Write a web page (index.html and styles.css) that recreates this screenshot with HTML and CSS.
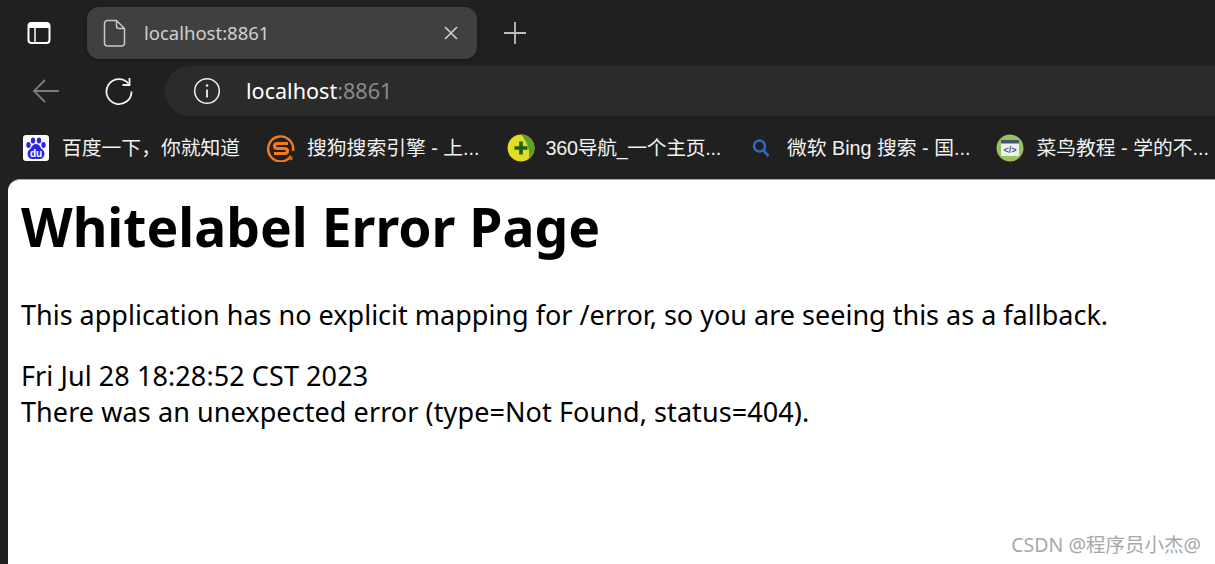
FILE: index.html
```html
<!DOCTYPE html>
<html>
<head>
    <title>Whitelabel Error Page</title>
    <link rel="stylesheet" href="styles.css">
</head>
<body>
    <div class="tabstrip">
        <svg class="sidebar-icon" width="26" height="26" viewBox="0 0 26 26">
            <rect x="2.500" y="3" width="21" height="20" rx="3" fill="none" stroke="#fff" stroke-width="2"/>
            <path d="M2.500 6a3 3 0 0 1 3-3h15a3 3 0 0 1 3 3v2h-21z" fill="#fff"/>
            <path d="M9 8v15" stroke="#fff" stroke-width="1.500"/>
        </svg>
        <div class="tab">
            <svg class="page-icon" width="24" height="28" viewBox="0 0 24 28">
                <path d="M4.500 1.500h9l8 8v14.500a3 3 0 0 1-3 3h-14a3 3 0 0 1-3-3v-19.500a3 3 0 0 1 3-3z M13.500 1.500v5.500a2.500 2.500 0 0 0 2.500 2.500h5.500" fill="none" stroke="#c8c8c8" stroke-width="1.500"/>
            </svg>
            <span class="tab-title">localhost:8861</span>
            <svg class="tab-close" width="16" height="16" viewBox="0 0 16 16">
                <path d="M2 2l12 12M14 2L2 14" stroke="#cfcfcf" stroke-width="1.600"/>
            </svg>
        </div>
        <svg class="new-tab" width="24" height="24" viewBox="0 0 24 24">
            <path d="M12 1v22M1 12h22" stroke="#bdbdbd" stroke-width="1.800"/>
        </svg>
    </div>

    <div class="toolbar">
        <svg class="back" width="30" height="26" viewBox="0 0 30 26">
            <path d="M28 13H3M14 2L3 13l11 11" fill="none" stroke="#7b7b7b" stroke-width="1.800"/>
        </svg>
        <svg class="reload" width="30" height="30" viewBox="0 0 30 30">
            <path d="M24.500 7.500A12.500 12.500 0 1 0 27.500 15.500" fill="none" stroke="#f2f2f2" stroke-width="1.800"/>
            <path d="M25.500 2v7h-7" fill="none" stroke="#f2f2f2" stroke-width="1.800"/>
        </svg>
        <div class="address">
            <svg width="28" height="28" viewBox="0 0 28 28">
                <circle cx="14" cy="14" r="12.300" fill="none" stroke="#f2f2f2" stroke-width="1.500"/>
                <path d="M14 12.500v8" stroke="#f2f2f2" stroke-width="1.800"/>
                <circle cx="14" cy="8.500" r="1.200" fill="#f2f2f2"/>
            </svg>
            <span class="url">localhost<span class="port">:8861</span></span>
        </div>
    </div>

    <div class="bookmarks">
        <div class="bookmark">
            <svg class="fav" width="28" height="28" viewBox="0 0 28 28">
                <rect x="1" y="1" width="26" height="26" rx="3" fill="#fff"/>
                <g fill="#2f22e0">
                    <ellipse cx="6.500" cy="11" rx="2.200" ry="3"/>
                    <ellipse cx="11" cy="6.500" rx="2.200" ry="3"/>
                    <ellipse cx="17" cy="6.500" rx="2.200" ry="3"/>
                    <ellipse cx="21.500" cy="11" rx="2.200" ry="3"/>
                    <path d="M14 10c4 0 4 4 7 6 3 3 1 9-3 9H10c-4 0-6-6-3-9 3-2 3-6 7-6z"/>
                </g>
                <text x="14" y="23" class="du">du</text>
            </svg>
            <span class="name">百度一下，你就知道</span>
        </div>
        <div class="bookmark sogou">
            <svg class="fav" width="28" height="28" viewBox="0 0 28 28">
                <path d="M24 22A12.500 12.500 0 1 1 26 17" fill="none" stroke="#f47a1c" stroke-width="2.400"/>
                <circle cx="24" cy="24.500" r="1.800" fill="#e0561a"/>
                <path d="M21 9.500H10.500q-3 0-3 2.500t3 2.500h7q3 0 3 2.500t-3 2.500H7" fill="none" stroke="#f47a1c" stroke-width="3.200"/>
            </svg>
            <span class="name">搜狗搜索引擎 - 上...</span>
        </div>
        <div class="bookmark nav360">
            <svg class="fav" width="28" height="28" viewBox="0 0 28 28">
                <circle cx="14" cy="14" r="13.500" fill="#e3dc20"/>
                <path d="M14 .5a13.500 13.500 0 0 1 13.500 13.500c0 5-3 9-6 11 2-6 0-16-7.500-24.500z" fill="#58a32e"/>
                <path d="M14 7.500v13M7.500 14h13" stroke="#1d5e22" stroke-width="3.600"/>
            </svg>
            <span class="name">360导航_一个主页...</span>
        </div>
        <div class="bookmark bing">
            <svg class="fav" width="28" height="28" viewBox="0 0 28 28">
                <circle cx="12.500" cy="12" r="5.500" fill="none" stroke="#2a6ac0" stroke-width="2.600"/>
                <path d="M16.500 16.500l5 5.500" stroke="#2a6ac0" stroke-width="2.800"/>
            </svg>
            <span class="name">微软 Bing 搜索 - 国...</span>
        </div>
        <div class="bookmark runoob">
            <svg class="fav" width="28" height="28" viewBox="0 0 28 28">
                <circle cx="14" cy="14" r="13.500" fill="#96c35e"/>
                <rect x="5" y="6" width="18" height="16" rx="1" fill="#eef0ec"/>
                <rect x="5" y="6" width="18" height="3.500" fill="#44596b"/>
                <text x="14" y="19" class="tag">&lt;/&gt;</text>
            </svg>
            <span class="name">菜鸟教程 - 学的不...</span>
        </div>
    </div>

    <div class="page">
        <h1>Whitelabel Error Page</h1>
        <p>This application has no explicit mapping for /error, so you are seeing this as a fallback.</p>
        <div class="line">Fri Jul 28 18:28:52 CST 2023</div>
        <div class="line">There was an unexpected error (type=Not Found, status=404).</div>
        <span class="watermark">CSDN @程序员小杰@</span>
    </div>
</body>
</html>
```

FILE: styles.css
```css
html, body {
    height: 100%;
}

body {
    margin: 0;
    display: flex;
    flex-direction: column;
    overflow: hidden;
    background-color: #202020;
    font-family: "Noto Sans", "Noto Sans CJK SC", sans-serif;
}

svg {
    flex: none;
}

.tabstrip {
    display: flex;
    align-items: center;
    height: 66px;
    padding-left: 26px;
    box-sizing: border-box;
}

.tab {
    display: flex;
    align-items: center;
    width: 390px;
    height: 52px;
    margin-left: 35px;
    margin-top: -1px;
    padding: 0 18px 0 16px;
    box-sizing: border-box;
    background-color: #404040;
    border-radius: 12px;
    box-shadow: 0 1px 3px rgba(0, 0, 0, 0.4);
}

.tab-title {
    flex: 1;
    margin-left: 17px;
    color: #d0d0d0;
    font-size: 18.500px;
}

.new-tab {
    margin-left: 26px;
}

.toolbar {
    display: flex;
    align-items: center;
    height: 50px;
    padding-left: 31px;
}

.reload {
    margin-left: 43px;
}

.address {
    display: flex;
    align-items: center;
    flex: 1;
    height: 50px;
    margin-left: 31px;
    padding-left: 28px;
    background-color: #2b2b2b;
    border-radius: 25px 0 0 25px;
}

.url {
    margin-left: 25px;
    margin-top: -1px;
    color: #fff;
    font-size: 21.600px;
}

.port {
    color: #8a8a8a;
}

.bookmarks {
    display: flex;
    align-items: center;
    height: 63px;
    padding-left: 22px;
    white-space: nowrap;
    font-family: "Liberation Sans", "Noto Sans CJK SC", sans-serif;
}

.bookmark {
    display: flex;
    align-items: center;
    gap: 12px;
    margin-right: 26px;
    color: #f2f2f2;
    font-size: 19.800px;
}

.name {
    margin-top: -2px;
}

.sogou {
    margin-left: 1px;
}

.nav360 {
    gap: 11px;
    margin-left: 1px;
}

.nav360 .name {
    letter-spacing: -0.3px;
}

.du {
    fill: #fff;
    font-size: 10px;
    font-weight: bold;
    text-anchor: middle;
}

.tag {
    fill: #44596b;
    font-size: 9px;
    font-weight: bold;
    text-anchor: middle;
}

.page {
    position: relative;
    flex: 1;
    margin-left: 8px;
    padding: 0 13px;
    background-color: #fff;
    border-top: 1px solid #aaa;
    border-top-left-radius: 12px;
    color: #000;
    font-size: 27px;
    line-height: 36px;
}

h1 {
    margin: 13px 0 36px;
    font-size: 53.400px;
    line-height: 68px;
}

p {
    margin: 0 0 25px;
}

.line {
    letter-spacing: 0.08px;
}

.watermark {
    position: absolute;
    right: 14px;
    bottom: 6px;
    color: #a8a8a8;
    font-size: 19.500px;
    line-height: 26px;
}
```
